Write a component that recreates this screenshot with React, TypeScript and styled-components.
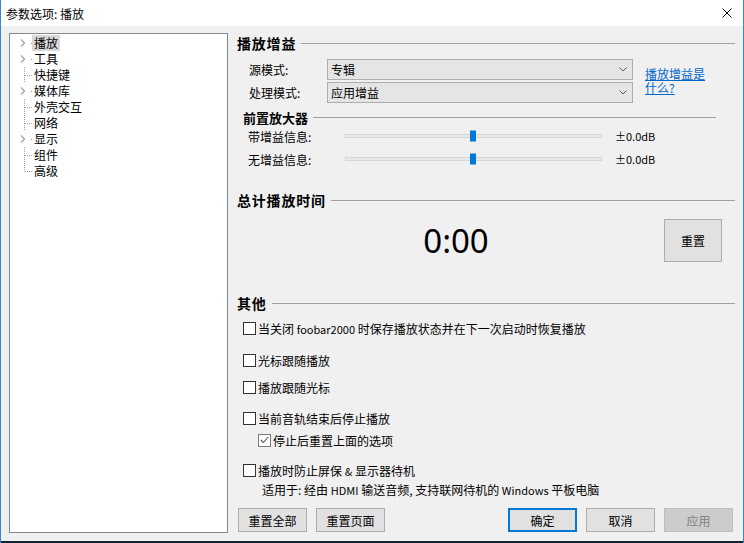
import React from 'react';
import styled, { createGlobalStyle, css } from 'styled-components';

const CJK = `"Noto Sans CJK SC", "Noto Sans", sans-serif`;

const Global = createGlobalStyle`
  html, body { margin: 0; padding: 0; background: #f0f0f0; }
  body { font-family: ${CJK}; font-size: 12px; color: #000; }
  * { box-sizing: border-box; }
`;

const Window = styled.div`
  width: 744px;
  height: 543px;
  display: flex;
  flex-direction: column;
  border-left: 1px solid #3a86d4;
  border-right: 1px solid #3a86d4;
  background: #f0f0f0;
  overflow: hidden;
`;

const TitleBar = styled.div`
  height: 26px;
  flex: none;
  background: #fff;
  display: flex;
  align-items: center;
  justify-content: space-between;
  padding: 0 11px 0 5px;
  font-size: 12px;
`;

const Main = styled.div`
  flex: 1;
  display: flex;
  gap: 9px;
  padding: 7px 7px 8px 8px;
  min-height: 0;
`;

const BottomStrip = styled.div`
  height: 2px;
  flex: none;
  background: #0f2236;
`;

const Tree = styled.div`
  width: 219px;
  flex: none;
  background: #fff;
  border: 1px solid #828790;
  padding-top: 1px;
`;

const TreeRowBox = styled.div`
  height: 16px;
  display: flex;
  align-items: center;
`;

const TreeLabel = styled.span<{ $selected?: boolean }>`
  padding: 0 2px;
  line-height: 16px;
  height: 16px;
  background: ${(p) => (p.$selected ? '#d9d9d9' : 'transparent')};
`;

type Kind = 'branch' | 'leaf' | 'last';

const TreeIndicator = ({ kind }: { kind: Kind }) => (
  <svg width="22" height="16" viewBox="0 0 22 16" style={{ flex: 'none' }}>
    {kind === 'branch' ? (
      <>
        <path d="M11 4.5 L14.5 8 L11 11.5" fill="none" stroke="#a6a6a6" strokeWidth="1.4" />
        <rect x="21" y="8" width="1" height="1" fill="#a0a0a0" />
      </>
    ) : (
      <>
        <line x1="14.5" y1="0" x2="14.5" y2={kind === 'last' ? 8.5 : 16} stroke="#a0a0a0" strokeWidth="1" strokeDasharray="1 1" />
        <line x1="15" y1="8.5" x2="22" y2="8.5" stroke="#a0a0a0" strokeWidth="1" strokeDasharray="1 1" />
      </>
    )}
  </svg>
);

const treeItems: { label: string; kind: Kind; selected?: boolean }[] = [
  { label: '播放', kind: 'branch', selected: true },
  { label: '工具', kind: 'branch' },
  { label: '快捷键', kind: 'leaf' },
  { label: '媒体库', kind: 'branch' },
  { label: '外壳交互', kind: 'leaf' },
  { label: '网络', kind: 'leaf' },
  { label: '显示', kind: 'branch' },
  { label: '组件', kind: 'leaf' },
  { label: '高级', kind: 'last' },
];

const Panel = styled.div`
  flex: 1;
  display: flex;
  flex-direction: column;
  padding-top: 1px;
  min-width: 0;
`;

const Heading = styled.div<{ $size: number; $indent?: number; $right?: number; $mt?: number }>`
  display: flex;
  align-items: center;
  height: 18px;
  flex: none;
  font-weight: bold;
  font-size: ${(p) => p.$size}px;
  letter-spacing: ${(p) => (p.$size > 13 ? '0.8px' : '0')};
  padding-left: ${(p) => p.$indent ?? 0}px;
  margin-right: ${(p) => p.$right ?? 1}px;
  margin-top: ${(p) => p.$mt ?? 0}px;
  white-space: nowrap;
  &::after {
    content: '';
    flex: 1;
    height: 1px;
    background: #a0a0a0;
    margin-left: 5px;
    margin-top: 1px;
  }
`;

const GainBlock = styled.div`
  display: flex;
  align-items: center;
  margin-top: 7px;
`;

const FormCol = styled.div`
  display: flex;
  flex-direction: column;
  gap: 2px;
`;

const FormRow = styled.div`
  display: flex;
  align-items: center;
  height: 21px;
  padding-left: 12px;
`;

const FieldLabel = styled.span<{ $w: number }>`
  width: ${(p) => p.$w}px;
  flex: none;
`;

const Combo = styled.div`
  width: 306px;
  height: 21px;
  display: flex;
  align-items: center;
  justify-content: space-between;
  padding: 0 5px 0 3px;
  background: #e5e5e5;
  border: 1px solid #adadad;
`;

const Chevron = () => (
  <svg width="8" height="5" viewBox="0 0 8 5">
    <path d="M0.5 0.5 L4 4 L7.5 0.5" fill="none" stroke="#5a5a5a" strokeWidth="1" />
  </svg>
);

const HelpLink = styled.a`
  width: 62px;
  margin-left: 12px;
  color: #0066cc;
  text-decoration: underline;
  line-height: 14px;
  cursor: pointer;
`;

const SliderRow = styled.div<{ $mt?: number }>`
  display: flex;
  align-items: center;
  height: 20px;
  padding-left: 11px;
  margin-top: ${(p) => p.$mt ?? 0}px;
`;

const Track = styled.div`
  position: relative;
  width: 257px;
  height: 4px;
  background: #e7eaea;
  border: 1px solid #d6d6d6;
`;

const Thumb = styled.div<{ $left: number }>`
  position: absolute;
  left: ${(p) => p.$left}px;
  top: 50%;
  width: 6px;
  height: 11px;
  transform: translateY(-50%);
  background: #0078d7;
`;

const Value = styled.span`
  margin-left: 13px;
  font-size: 11px;
`;

const TimerRow = styled.div`
  display: flex;
  align-items: center;
  height: 43px;
  margin-top: 10px;
`;

const TimerText = styled.div`
  flex: 1;
  text-align: center;
  padding-left: 11px;
  font-family: "Noto Sans", "Open Sans", sans-serif;
  font-size: 33px;
  line-height: 43px;
  color: #000;
`;

const Button = styled.button<{ $w?: number; $h?: number; $primary?: boolean }>`
  width: ${(p) => p.$w ?? 69}px;
  height: ${(p) => p.$h ?? 24}px;
  flex: none;
  font-family: ${CJK};
  font-size: 12px;
  color: #000;
  background: #e1e1e1;
  border: 1px solid #adadad;
  padding: 0;
  ${(p) =>
    p.$primary &&
    css`
      border-color: #0078d7;
      box-shadow: inset 0 0 0 1px #0078d7;
    `}
  &:disabled {
    background: #cccccc;
    border-color: #bfbfbf;
    color: #838383;
  }
`;

const CheckRow = styled.label<{ $indent?: number; $mt?: number }>`
  display: flex;
  align-items: center;
  gap: 2px;
  height: 18px;
  padding-left: ${(p) => p.$indent ?? 6}px;
  margin-top: ${(p) => p.$mt ?? 0}px;
`;

const Box = styled.span<{ $checked?: boolean }>`
  width: 13px;
  height: 13px;
  flex: none;
  display: flex;
  align-items: center;
  justify-content: center;
  background: #fff;
  border: 1px solid ${(p) => (p.$checked ? '#7a7a7a' : '#333')};
`;

const Latin = styled.span`
  font-size: 11px;
`;

const Note = styled.div`
  height: 18px;
  display: flex;
  align-items: center;
  padding-left: 25px;
  margin-top: 1px;
`;

const ButtonBar = styled.div`
  display: flex;
  align-items: center;
  gap: 9px;
  margin-top: 10px;
  padding: 0 3px 0 1px;
`;

const Spacer = styled.div`
  flex: 1;
`;

const Check = ({ checked, children, indent, mt }: { checked?: boolean; children: React.ReactNode; indent?: number; mt?: number }) => (
  <CheckRow $indent={indent} $mt={mt}>
    <Box $checked={checked}>
      {checked && (
        <svg width="9" height="8" viewBox="0 0 9 8">
          <path d="M0.8 4 L3.3 6.5 L8.2 1" fill="none" stroke="#555" strokeWidth="1.1" />
        </svg>
      )}
    </Box>
    <span>{children}</span>
  </CheckRow>
);

export default function App() {
  return (
    <>
      <Global />
      <Window>
        <TitleBar>
          <span>参数选项: 播放</span>
          <svg width="10" height="10" viewBox="0 0 10 10">
            <path d="M0.5 0.5 L9.5 9.5 M9.5 0.5 L0.5 9.5" stroke="#000" strokeWidth="1" />
          </svg>
        </TitleBar>
        <Main>
          <Tree>
            {treeItems.map((it) => (
              <TreeRowBox key={it.label}>
                <TreeIndicator kind={it.kind} />
                <TreeLabel $selected={it.selected}>{it.label}</TreeLabel>
              </TreeRowBox>
            ))}
          </Tree>
          <Panel>
            <Heading $size={14}>播放增益</Heading>
            <GainBlock>
              <FormCol>
                <FormRow>
                  <FieldLabel $w={78}>源模式:</FieldLabel>
                  <Combo>
                    <span>专辑</span>
                    <Chevron />
                  </Combo>
                </FormRow>
                <FormRow>
                  <FieldLabel $w={78}>处理模式:</FieldLabel>
                  <Combo>
                    <span>应用增益</span>
                    <Chevron />
                  </Combo>
                </FormRow>
              </FormCol>
              <HelpLink>播放增益是什么?</HelpLink>
            </GainBlock>
            <Heading $size={13} $indent={6} $right={20} $mt={5}>前置放大器</Heading>
            <SliderRow>
              <FieldLabel $w={97}>带增益信息:</FieldLabel>
              <Track>
                <Thumb $left={124} />
              </Track>
              <Value>±0.0dB</Value>
            </SliderRow>
            <SliderRow $mt={3}>
              <FieldLabel $w={97}>无增益信息:</FieldLabel>
              <Track>
                <Thumb $left={124} />
              </Track>
              <Value>±0.0dB</Value>
            </SliderRow>
            <Heading $size={14} $mt={22}>总计播放时间</Heading>
            <TimerRow>
              <TimerText>0:00</TimerText>
              <Button $w={58} $h={43} style={{ marginRight: 14 }}>重置</Button>
            </TimerRow>
            <Heading $size={14} $mt={32}>其他</Heading>
            <Check mt={7}>
              当关闭 <Latin>foobar2000</Latin> 时保存播放状态并在下一次启动时恢复播放
            </Check>
            <Check mt={14}>光标跟随播放</Check>
            <Check mt={9}>播放跟随光标</Check>
            <Check mt={13}>当前音轨结束后停止播放</Check>
            <Check mt={4} indent={21} checked>
              停止后重置上面的选项
            </Check>
            <Check mt={12}>
              播放时防止屏保 <Latin>&amp;</Latin> 显示器待机
            </Check>
            <Note>
              <span>
                适用于: 经由 <Latin>HDMI</Latin> 输送音频, 支持联网待机的 <Latin>Windows</Latin> 平板电脑
              </span>
            </Note>
            <ButtonBar>
              <Button>重置全部</Button>
              <Button>重置页面</Button>
              <Spacer />
              <Button $primary>确定</Button>
              <Button>取消</Button>
              <Button disabled>应用</Button>
            </ButtonBar>
          </Panel>
        </Main>
        <BottomStrip />
      </Window>
    </>
  );
}
